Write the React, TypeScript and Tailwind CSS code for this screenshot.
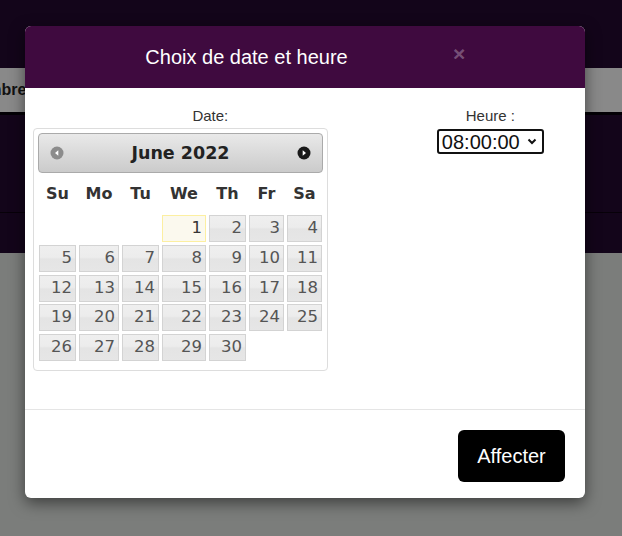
import React from "react";

const weekdays = ["Su", "Mo", "Tu", "We", "Th", "Fr", "Sa"];

// June 2022 starts on a Wednesday
const cells: (number | null)[] = [
  null, null, null, 1, 2, 3, 4,
  5, 6, 7, 8, 9, 10, 11,
  12, 13, 14, 15, 16, 17, 18,
  19, 20, 21, 22, 23, 24, 25,
  26, 27, 28, 29, 30, null, null,
];

function CircleArrow({ dir, color }: { dir: "w" | "e"; color: string }) {
  return (
    <svg width="14" height="14" viewBox="0 0 14 14">
      <circle cx="7" cy="7" r="6.5" fill={color} />
      {dir === "w" ? (
        <path d="M8.3 4.2 L5 7 L8.3 9.8 Z" fill="#fff" />
      ) : (
        <path d="M5.7 4.2 L9 7 L5.7 9.8 Z" fill="#fff" />
      )}
    </svg>
  );
}

function DatePicker() {
  return (
    <div className="w-[295px] rounded-[4px] border border-[#dddddd] bg-white px-[4px] pt-[4px] pb-[9px] font-['DejaVu_Sans',Verdana,sans-serif]">
      {/* Month header */}
      <div className="flex h-[40px] items-center justify-between rounded-[4px] border border-[#aaaaaa] bg-gradient-to-b from-[#e9e9e9] to-[#cbcbcb] px-[11px]">
        <CircleArrow dir="w" color="#8c8c8c" />
        <span className="text-[17.5px] font-bold text-[#222222]">June 2022</span>
        <CircleArrow dir="e" color="#1a1a1a" />
      </div>

      {/* Weekday names */}
      <div className="grid h-[41px] grid-cols-[37px_40px_37px_44px_37px_35px_35px] items-center gap-x-[3px] pl-[1px]">
        {weekdays.map((d) => (
          <div key={d} className="text-center text-[16px] font-bold text-[#333333]">
            {d}
          </div>
        ))}
      </div>

      {/* Days */}
      <div className="grid grid-cols-[37px_40px_37px_44px_37px_35px_35px] gap-x-[3px] gap-y-[2.75px] pt-[1px] pl-[1px]">
        {cells.map((n, i) =>
          n === null ? (
            <div key={i} className="h-[27px]" />
          ) : n === 1 ? (
            <div
              key={i}
              className="flex h-[27px] items-center justify-end border border-[#fcefa1] bg-[#fbf9ee] pr-[3px] text-[16.5px] text-[#363636]"
            >
              {n}
            </div>
          ) : (
            <div
              key={i}
              className="flex h-[27px] items-center justify-end border border-[#d3d3d3] bg-[linear-gradient(to_bottom,#efefef_0%,#ececec_45%,#e4e4e4_52%,#e6e6e6_100%)] pr-[3px] text-[16.5px] text-[#555555]"
            >
              {n}
            </div>
          )
        )}
      </div>
    </div>
  );
}

export default function App() {
  return (
    <div className="relative h-[536px] w-[622px] overflow-hidden bg-[#7b7d7b] font-['Liberation_Sans',Arial,sans-serif]">
      {/* Page behind the backdrop */}
      <div className="h-[68px] bg-[#13051a]" />
      <div className="flex h-[44px] items-center overflow-hidden bg-[#898989]">
        <span className="ml-[-34px] text-[16px] font-bold text-[#111111]">Nombre</span>
      </div>
      <div className="h-[3px] bg-[#030005]" />
      <div className="h-[97px] bg-[#13051a]" />
      <div className="h-[1px] bg-[#070109]" />
      <div className="h-[40px] bg-[#13051a]" />

      {/* Modal */}
      <div className="absolute left-[25px] top-[26px] w-[560px] rounded-[6px] bg-white shadow-[0_5px_15px_rgba(0,0,0,0.5)]">
        <div className="relative flex h-[62px] items-center rounded-t-[6px] bg-[#3f0a3f]">
          <h4 className="w-[443px] text-center text-[20px] text-white">Choix de date et heure</h4>
          <span className="absolute left-[428px] top-[17px] text-[21px] font-bold leading-none text-white/30">
            ×
          </span>
        </div>

        <div className="flex pt-[19px] pb-[38px] pl-[8px]">
          <div className="flex w-[356px] flex-col">
            <div className="mb-[4px] text-center text-[15px] leading-[17px] text-[#333333]">Date:</div>
            <DatePicker />
          </div>
          <div className="ml-[8px] flex w-[190px] flex-col items-center">
            <div className="mb-[5px] text-center text-[15px] leading-[17px] text-[#333333]">Heure :</div>
            <div className="flex h-[25px] w-[107px] items-center justify-between rounded-[3px] border-2 border-[#111111] pl-[3px] pr-[5px]">
              <span className="text-[20px] leading-none text-[#111111]">08:00:00</span>
              <svg width="10" height="7" viewBox="0 0 10 7">
                <path d="M1.5 1.5 L5 5 L8.5 1.5" fill="none" stroke="#111" strokeWidth="2" />
              </svg>
            </div>
          </div>
        </div>

        <div className="flex justify-end border-t border-[#e5e5e5] pt-[20px] pr-[20px] pb-[16px]">
          <button className="h-[52px] w-[107px] rounded-[6px] bg-black text-[20px] text-white">Affecter</button>
        </div>
      </div>
    </div>
  );
}
